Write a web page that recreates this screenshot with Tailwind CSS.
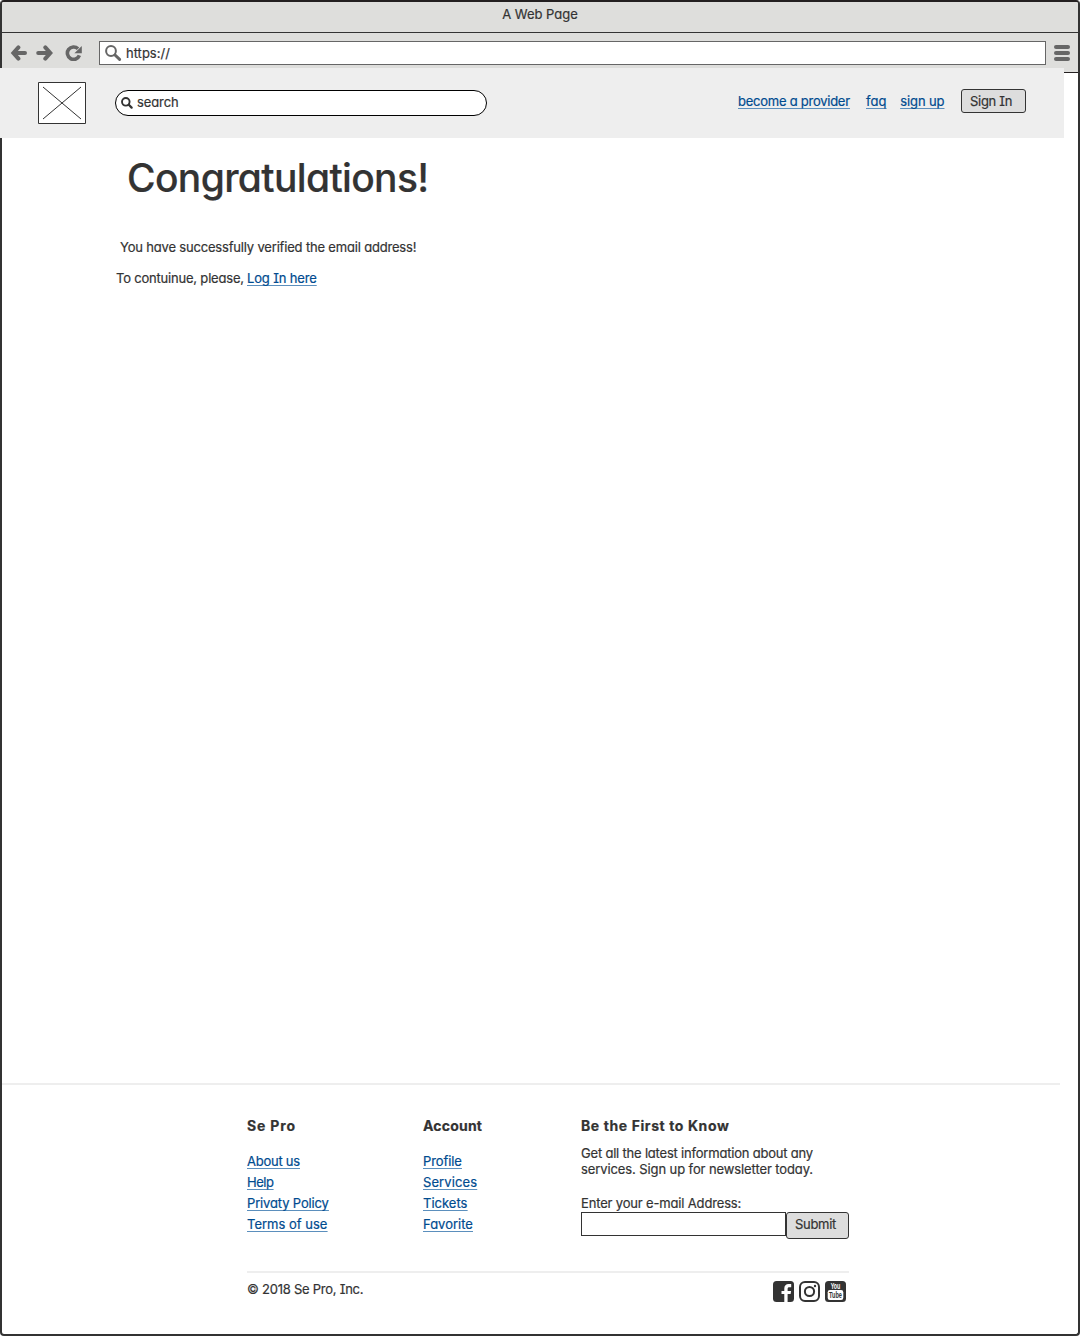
<!DOCTYPE html>
<html lang="en">
<head>
<meta charset="utf-8">
<title>A Web Page</title>
<script src="https://cdn.jsdelivr.net/npm/@tailwindcss/browser@4"></script>
</head>
<body class="bg-white font-['Inter',sans-serif] text-[13px] leading-4 text-[#333] [-webkit-text-stroke:0.2px] [font-feature-settings:'cv11','cv08'] [text-decoration-skip-ink:none]">
<div class="flex h-[1336px] w-[1080px] flex-col rounded-[4px] border-2 border-[#333] border-t-[#231f20]">

  <!-- Browser chrome -->
  <div class="h-[31px] shrink-0 rounded-t-[2px] border-b border-[#333] bg-[#dededc] pt-1 text-center">A Web Page</div>
  <div class="flex h-10 shrink-0 items-start border-b border-[#231f20] bg-[#dededc] pt-2 pl-2 text-[#666]">
    <svg class="mt-1 h-4 w-[18px]" viewBox="0 0 18 16" fill="none" stroke="currentColor" stroke-width="4" stroke-linecap="round" stroke-linejoin="miter"><path d="M8.4 2.4 3.4 8l5 5.6M4 8h11"/></svg>
    <svg class="mt-1 ml-2 h-4 w-[18px]" viewBox="0 0 18 16" fill="none" stroke="currentColor" stroke-width="4" stroke-linecap="round" stroke-linejoin="miter"><path d="M9.3 2.4 14.3 8l-5 5.6M13.7 8H2.2"/></svg>
    <svg class="mt-1 ml-[11px] h-4 w-[18px]" viewBox="0 0 18 16"><path d="M14.4 10.4A6.2 6.2 0 1 1 13 3.8" fill="none" stroke="currentColor" stroke-width="3.6"/><path d="M16.8 .9v7.4H9.4z" fill="currentColor"/></svg>
    <div class="ml-4 flex h-6 w-[947px] items-start border border-[#666] bg-white pl-[5px] text-[#333]">
      <svg class="mt-[3px] h-[17px] w-[17px] text-[#666]" viewBox="0 0 17 17" fill="none" stroke="currentColor"><circle cx="6" cy="6" r="4.9" stroke-width="2"/><path d="m10 10 4.6 4.4" stroke-width="3" stroke-linecap="round"/></svg>
      <span class="mt-[3px] ml-1">https://</span>
    </div>
    <div class="mt-1 ml-2 flex flex-col gap-[2px]">
      <i class="h-1 w-4 rounded-full bg-[#666]"></i><i class="h-1 w-4 rounded-full bg-[#666]"></i><i class="h-1 w-4 rounded-full bg-[#666]"></i>
    </div>
  </div>

  <!-- Site header -->
  <header class="relative -mt-[5px] -ml-[2px] flex h-[70px] w-[1064px] shrink-0 items-start bg-[#eee] pl-[38px]">
    <svg class="mt-[14px] h-[42px] w-12" viewBox="0 0 48 42" fill="#fff" stroke="#333"><path d="M.5.5h47v41H.5z"/><path d="m5 5 38 32M43 5 5 37"/></svg>
    <div class="mt-[22px] ml-[29px] flex h-[26px] w-[372px] items-start rounded-[13px] border border-black bg-white pl-[5px]">
      <svg class="mt-[6px] h-3 w-3" viewBox="0 0 12 12" fill="none" stroke="#333"><circle cx="4.8" cy="4.8" r="3.8" stroke-width="1.9"/><path d="m7.8 7.8 2.8 2.8" stroke-width="2.3" stroke-linecap="round"/></svg>
      <span class="mt-[3px] ml-[4px] tracking-[-0.1px]">search</span>
    </div>
    <nav class="mt-[25px] ml-[251px] flex text-[#004b8f] underline decoration-[#5b8fbd] decoration-1 underline-offset-2">
      <a class="w-[112px] tracking-[-0.25px] whitespace-nowrap">become a provider</a>
      <a class="ml-4">faq</a>
      <a class="ml-[14px] tracking-[-0.15px]">sign up</a>
    </nav>
    <button class="absolute top-[21px] left-[961px] flex h-6 w-[65px] items-start rounded-[3px] border border-[#333] bg-[#ddd] pt-[3px] pl-2 tracking-[-0.3px]">Sign In</button>
  </header>

  <!-- Confirmation message -->
  <main class="h-[945px] shrink-0 pl-[114px]">
    <h1 class="pt-[18px] pl-[11px] text-[39px] leading-[44px] font-medium tracking-[-0.65px]">Congratulations!</h1>
    <p class="mt-[39px] pl-[4px] tracking-[-0.18px]">You have successfully verified the email address!</p>
    <p class="mt-[15px] flex"><span class="w-[131px] tracking-[-0.2px] whitespace-nowrap">To contuinue, please,</span><a class="tracking-[-0.15px] text-[#004b8f] underline decoration-[#5b8fbd] decoration-1 underline-offset-2">Log In here</a></p>
  </main>

  <!-- Footer -->
  <footer class="flex-1">
    <div class="h-[2px] w-[1058px] bg-[#eee]"></div>
    <div class="ml-[245px] flex h-[186px] w-[602px] pt-[33px]">
      <section class="w-[176px]">
        <h2 class="text-[14px] font-bold tracking-[0.85px]">Se Pro</h2>
        <div class="mt-[19px] flex flex-col items-start gap-[5px] text-[#004b8f] underline decoration-[#5b8fbd] decoration-1 underline-offset-2">
          <a class="tracking-[-0.25px]">About us</a><a class="tracking-[-0.5px]">Help</a><a class="tracking-[-0.15px]">Privaty Policy</a><a>Terms of use</a>
        </div>
      </section>
      <section class="w-[158px]">
        <h2 class="text-[14px] font-bold tracking-[0.2px]">Account</h2>
        <div class="mt-[19px] flex flex-col items-start gap-[5px] text-[#004b8f] underline decoration-[#5b8fbd] decoration-1 underline-offset-2">
          <a class="tracking-[-0.1px]">Profile</a><a class="tracking-[0.1px]">Services</a><a>Tickets</a><a>Favorite</a>
        </div>
      </section>
      <section class="w-[268px] whitespace-nowrap">
        <h2 class="text-[14px] font-bold tracking-[0.6px]">Be the First to Know</h2>
        <p class="mt-[11px] tracking-[-0.2px]">Get all the latest information about any<br><span class="tracking-[-0.1px]">services. Sign up for newsletter today.</span></p>
        <p class="mt-[18px] tracking-[-0.16px]">Enter your e-mail Address:</p>
        <div class="mt-[1px] flex items-start">
          <div class="h-6 w-[205px] border border-[#333] bg-white"></div>
          <button class="flex h-[27px] w-[63px] items-start rounded-[3px] border border-[#333] bg-[#ddd] pt-[3px] pl-2 tracking-[-0.3px]">Submit</button>
        </div>
      </section>
    </div>
    <div class="ml-[245px] flex w-[602px] items-start border-t-2 border-[#eee] pt-2">
      <span class="tracking-[-0.25px]">© 2018 Se Pro, Inc.</span>
      <div class="mr-[3px] ml-auto flex gap-[5px]">
        <svg class="h-[21px] w-[21px]" viewBox="0 0 21 21"><rect width="21" height="21" rx="3.5" fill="#333"/><path d="M11.3 21v-8H8.5v-3h2.8V7.5c0-2.8 1.7-4.4 4.3-4.4h2.6v3.1h-1.9c-1.2 0-1.7.6-1.7 1.7V10h3.5l-.5 3h-3v8z" fill="#fff"/></svg>
        <svg class="h-[21px] w-[21px]" viewBox="0 0 21 21" fill="none" stroke="#333" stroke-width="2"><rect x="1" y="1" width="19" height="19" rx="5"/><circle cx="10.5" cy="10.5" r="4.6"/><circle cx="16" cy="5" r="1.2" fill="#333" stroke="none"/></svg>
        <svg class="h-[21px] w-[21px] overflow-visible" viewBox="0 0 21 21" font-family="Liberation Sans" font-weight="bold" text-anchor="middle"><rect width="21" height="21" rx="3.5" fill="#333"/><rect x="2.7" y="9" width="15.6" height="10" rx="2.2" fill="#fff"/><g transform="translate(10.5) scale(.62 1)"><text y="7.8" font-size="8.6" fill="#fff">You</text><text y="17" font-size="9" fill="#333">Tube</text></g></svg>
      </div>
    </div>
  </footer>
</div>
</body>
</html>
